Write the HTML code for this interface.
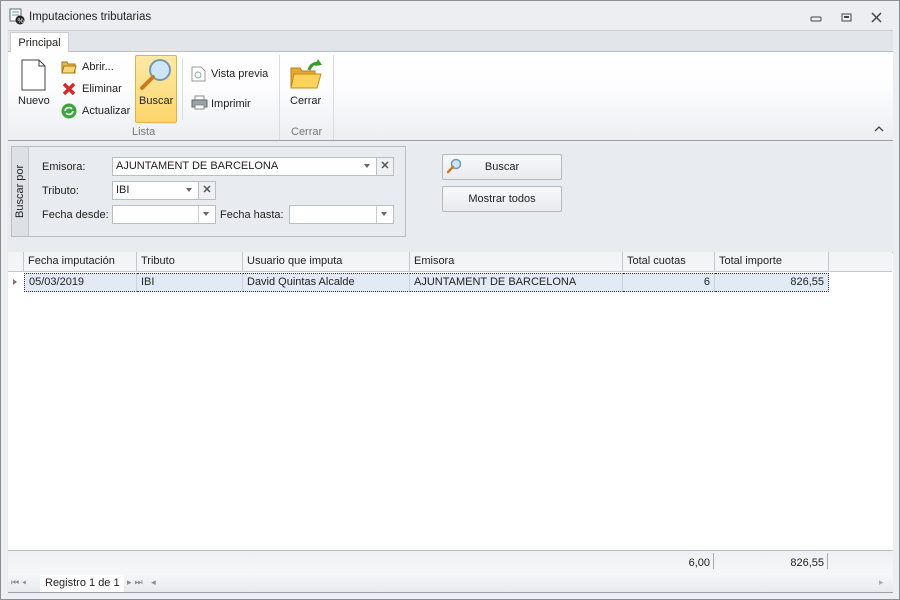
<!DOCTYPE html>
<html><head><meta charset="utf-8"><style>
*{box-sizing:border-box;margin:0;padding:0}
body{width:900px;height:600px;background:#f0f1f3;font-family:"Liberation Sans",Tahoma,sans-serif;font-size:11px;color:#222;position:relative;overflow:hidden;white-space:nowrap}
.a{position:absolute}
.win{left:0;top:0;width:900px;height:600px;border:1px solid #8a8f96;background:#eceef1}
.title{left:29px;top:11px;font-size:11.5px;color:#222}
.tabstrip{left:8px;top:30px;width:885px;height:22px;background:#e2e5e9;border-top:1px solid #c9cdd3}
.tab{left:10px;top:32px;width:59px;height:20px;background:#fff;border:1px solid #c9cdd3;border-bottom:none;text-align:center;line-height:20px}
.ribbon{left:8px;top:51px;width:885px;height:90px;background:linear-gradient(#fff,#fdfdfe 40%,#eceef1);border-top:1px solid #b9bec5;border-bottom:1px solid #9aa0a8}
.sep{width:1px;background:#d8dbe0}
.grp{color:#777}
.search{left:8px;top:141px;width:885px;height:111px;background:#e8ebef}
.box{left:11px;top:146px;width:395px;height:91px;border:1px solid #b9bec5;background:#e8ebef}
.vlab{left:11px;top:146px;width:18px;height:91px;background:#dde1e6;border-right:1px solid #c4c8ce;border-left:1px solid #b9bec5;border-top:1px solid #b9bec5;border-bottom:1px solid #b9bec5}
.inp{background:#fff;border:1px solid #b9bec5;height:19px;line-height:17px;padding-left:3px}
.btn{border:1px solid #b4b9c0;background:linear-gradient(#f7f8f9,#e9ebee);text-align:center;border-radius:2px}
.grid{left:8px;top:252px;width:885px;height:299px;background:#fff;border-top:1px solid #b9bec5}
.hdr{top:252px;height:20px;border-right:1px solid #c4c8ce;border-bottom:1px solid #c4c8ce;background:#f3f4f6;line-height:19px;padding-left:4px}
.cell{top:273px;height:19px;line-height:17px;background:#e1eaf5;padding:0 4px;border-right:1px solid #c9d3e0;border-top:1px dotted #333;border-bottom:1px dotted #333}
.foot{left:8px;top:550px;width:885px;height:25px;background:linear-gradient(#eef0f3,#f6f7f8);border-top:1px solid #b9bec5}
.nav{left:8px;top:575px;width:885px;height:17px;background:linear-gradient(#f5f6f7,#e7e9ec)}
</style></head><body>
<div class="a win"></div>
<svg class="a" style="left:9px;top:8px" width="16" height="17"><rect x="1" y="1" width="11" height="12" fill="#fff" stroke="#666"/><line x1="3" y1="4" x2="10" y2="4" stroke="#4a8"/><line x1="3" y1="7" x2="10" y2="7" stroke="#888"/><circle cx="11" cy="12" r="4.5" fill="#222"/><text x="8.5" y="15" font-size="7" fill="#fff" font-family="Liberation Sans">%</text></svg>
<div class="a title">Imputaciones tributarias</div>
<svg class="a" style="left:808px;top:12px" width="80" height="12"><rect x="3" y="5" width="10" height="4" rx="1" fill="none" stroke="#444"/><rect x="34" y="2" width="9" height="7" fill="none" stroke="#444"/><rect x="36" y="4" width="5" height="2" fill="#444"/><path d="M64 1l9 9M73 1l-9 9" stroke="#444" stroke-width="1.5"/></svg>
<div class="a tabstrip"></div>
<div class="a ribbon"></div>
<div class="a tab">Principal</div>
<svg class="a" style="left:21px;top:59px" width="26" height="32"><path d="M1 1h17l6 6v24H1z" fill="#fff" stroke="#444"/><path d="M18 1v6h6" fill="none" stroke="#444"/></svg>
<div class="a" style="left:18px;top:95px">Nuevo</div>
<svg class="a" style="left:61px;top:60px" width="16" height="14"><path d="M1 2h5l1 2h7v9H1z" fill="#e9b44a" stroke="#a8761c"/><path d="M3 6h12l-2 7H1z" fill="#f7d67a" stroke="#a8761c"/></svg>
<div class="a" style="left:82px;top:61px">Abrir...</div>
<svg class="a" style="left:62px;top:82px" width="14" height="14"><path d="M2 2l10 10M12 2L2 12" stroke="#d42a2a" stroke-width="3.5"/></svg>
<div class="a" style="left:82px;top:83px">Eliminar</div>
<svg class="a" style="left:61px;top:103px" width="16" height="16"><circle cx="8" cy="8" r="7.5" fill="#3ca53c"/><path d="M4 8a4 4 0 0 1 7-2M12 8a4 4 0 0 1-7 2" stroke="#fff" stroke-width="1.6" fill="none"/></svg>
<div class="a" style="left:82px;top:105px">Actualizar</div>
<div class="a" style="left:135px;top:55px;width:42px;height:68px;border:1px solid #e0b24a;border-radius:2px;background:linear-gradient(#fde9a6,#fbd66b)"></div>
<svg class="a" style="left:139px;top:57px" width="34" height="34"><circle cx="21" cy="13" r="10" fill="#cde6f8" stroke="#7897b0" stroke-width="2"/><path d="M14 20L3 31" stroke="#c87a22" stroke-width="4" stroke-linecap="round"/></svg>
<div class="a" style="left:139px;top:95px">Buscar</div>
<div class="a sep" style="left:182px;top:58px;height:62px"></div>
<svg class="a" style="left:191px;top:66px" width="15" height="16"><path d="M1 1h9l4 4v10H1z" fill="#fff" stroke="#999"/><circle cx="7" cy="9" r="3" fill="none" stroke="#8aa"/></svg>
<div class="a" style="left:211px;top:68px">Vista previa</div>
<svg class="a" style="left:191px;top:95px" width="17" height="15"><rect x="4" y="1" width="9" height="5" fill="#fff" stroke="#888"/><rect x="1" y="5" width="15" height="7" fill="#9aa3ad" stroke="#666"/><rect x="4" y="10" width="9" height="4" fill="#fff" stroke="#888"/></svg>
<div class="a" style="left:211px;top:98px">Imprimir</div>
<div class="a sep" style="left:279px;top:55px;height:85px"></div>
<div class="a grp" style="left:132px;top:126px">Lista</div>
<svg class="a" style="left:289px;top:58px" width="34" height="34"><path d="M2 10h9l2 3h13v17H2z" fill="#e6a92a" stroke="#b7801a"/><path d="M5 16h27l-4 14H2z" fill="#fbd35a" stroke="#c08a1c"/><path d="M20 12c2-6 7-8 11-6" stroke="#3a9a2a" stroke-width="3" fill="none"/><path d="M29 1l4 6-7 1z" fill="#3a9a2a"/></svg>
<div class="a" style="left:290px;top:95px">Cerrar</div>
<div class="a grp" style="left:291px;top:126px">Cerrar</div>
<div class="a sep" style="left:333px;top:55px;height:85px"></div>
<svg class="a" style="left:874px;top:125px" width="10" height="8"><path d="M1 6l4-4 4 4" stroke="#444" fill="none" stroke-width="1.3"/></svg>
<div class="a search"></div>
<div class="a box"></div>
<div class="a vlab"></div>
<div class="a" style="left:14px;top:218px;transform:rotate(-90deg);transform-origin:0 0">Buscar por</div>
<div class="a" style="left:42px;top:161px">Emisora:</div>
<div class="a inp" style="left:112px;top:157px;width:265px">AJUNTAMENT DE BARCELONA</div>
<div class="a" style="left:376px;top:157px;width:18px;height:19px;background:#eef0f2;border:1px solid #b9bec5;text-align:center;line-height:17px;font-weight:bold;color:#555">✕</div>
<div class="a" style="left:364px;top:164px;border:3.5px solid transparent;border-top:4px solid #666"></div>
<div class="a" style="left:42px;top:185px">Tributo:</div>
<div class="a inp" style="left:112px;top:181px;width:87px">IBI</div>
<div class="a" style="left:198px;top:181px;width:18px;height:19px;background:#eef0f2;border:1px solid #b9bec5;text-align:center;line-height:17px;font-weight:bold;color:#555">✕</div>
<div class="a" style="left:186px;top:188px;border:3.5px solid transparent;border-top:4px solid #666"></div>
<div class="a" style="left:42px;top:209px">Fecha desde:</div>
<div class="a inp" style="left:112px;top:205px;width:104px"></div>
<div class="a" style="left:198px;top:206px;width:1px;height:17px;background:#ccc"></div>
<div class="a" style="left:203px;top:212px;border:3.5px solid transparent;border-top:4px solid #666"></div>
<div class="a" style="left:220px;top:209px">Fecha hasta:</div>
<div class="a inp" style="left:289px;top:205px;width:105px"></div>
<div class="a" style="left:376px;top:206px;width:1px;height:17px;background:#ccc"></div>
<div class="a" style="left:381px;top:212px;border:3.5px solid transparent;border-top:4px solid #666"></div>
<div class="a btn" style="left:442px;top:154px;width:120px;height:26px;line-height:24px">Buscar</div>
<svg class="a" style="left:446px;top:158px" width="16" height="16"><circle cx="10" cy="6" r="4.5" fill="#cde6f8" stroke="#7897b0" stroke-width="1.5"/><path d="M7 9l-5 5" stroke="#c87a22" stroke-width="2.5" stroke-linecap="round"/></svg>
<div class="a btn" style="left:442px;top:186px;width:120px;height:26px;line-height:24px">Mostrar todos</div>
<div class="a grid"></div>
<div class="a hdr" style="left:8px;width:16px"></div>
<div class="a hdr" style="left:24px;width:113px">Fecha imputación</div>
<div class="a hdr" style="left:137px;width:106px">Tributo</div>
<div class="a hdr" style="left:243px;width:167px">Usuario que imputa</div>
<div class="a hdr" style="left:410px;width:213px">Emisora</div>
<div class="a hdr" style="left:623px;width:92px">Total cuotas</div>
<div class="a hdr" style="left:715px;width:114px">Total importe</div>
<div class="a hdr" style="left:829px;width:63px;border-right:none"></div>
<div class="a" style="left:13px;top:279px;border:3px solid transparent;border-left:4px solid #777"></div>
<div class="a cell" style="left:24px;width:113px;border-left:1px dotted #333">05/03/2019</div>
<div class="a cell" style="left:137px;width:106px">IBI</div>
<div class="a cell" style="left:243px;width:167px">David Quintas Alcalde</div>
<div class="a cell" style="left:410px;width:213px">AJUNTAMENT DE BARCELONA</div>
<div class="a cell" style="left:623px;width:92px;text-align:right">6</div>
<div class="a cell" style="left:715px;width:114px;text-align:right;border-right:1px dotted #333">826,55</div>
<div class="a foot"></div>
<div class="a" style="left:600px;top:557px;width:110px;text-align:right">6,00</div>
<div class="a" style="left:713px;top:553px;width:1px;height:16px;background:#aaa"></div>
<div class="a" style="left:720px;top:557px;width:104px;text-align:right">826,55</div>
<div class="a" style="left:827px;top:553px;width:1px;height:16px;background:#aaa"></div>
<div class="a nav"></div>
<div class="a" style="left:11px;top:577px;font-size:9px;color:#888;letter-spacing:3px">⏮◂</div>
<div class="a" style="left:40px;top:575px;width:84px;height:17px;background:#fff;padding-left:5px;line-height:16px">Registro 1 de 1</div>
<div class="a" style="left:127px;top:577px;font-size:9px;color:#888;letter-spacing:3px">▸⏭ ◂</div>
<div class="a" style="left:879px;top:577px;font-size:9px;color:#aaa">▸</div>
<div class="a" style="left:8px;top:592px;width:885px;height:1px;background:#9aa0a8"></div>
</body></html>
